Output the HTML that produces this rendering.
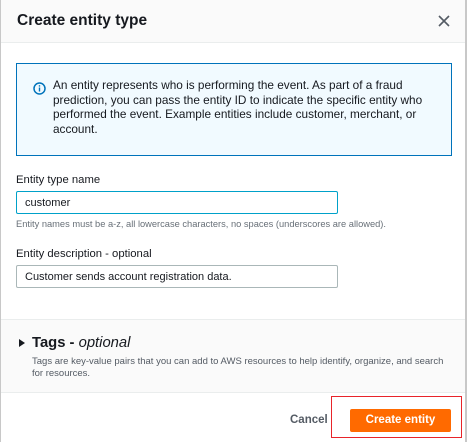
<!DOCTYPE html>
<html><head><meta charset="utf-8"><style>
*{margin:0;padding:0;box-sizing:border-box}
body{width:468px;height:442px;background:#fff;font-family:"Liberation Sans",sans-serif;color:#16191f;position:relative;overflow:hidden}
.frame{position:absolute;left:0;top:0;width:467px;height:442px;border-left:1px solid #c8c8c8;border-right:2px solid #c8c8c8}
.hdr{position:absolute;left:1px;top:0;width:464px;height:43px;background:#fafafa;border-bottom:1px solid #eaeded}
.hdr h1{position:absolute;left:16px;top:12px;font-size:15.5px;font-weight:bold}
.x{position:absolute;left:436px;top:14px}
.info{position:absolute;left:16px;top:63px;width:436px;height:93px;background:#f1faff;border:1px solid #0073bb;}
.info .ic{position:absolute;left:16px;top:18px}
.info p{position:absolute;left:36px;top:14px;width:372px;font-size:11.8px;line-height:14.7px}
.lbl{position:absolute;left:16px;font-size:11.3px}
.inp{position:absolute;left:16px;width:322px;height:23px;border:1px solid #aab7b8;border-radius:2px;font-size:11px;padding:5px 8px}
.hint{position:absolute;left:16px;top:219px;font-size:9.3px;color:#687078}
.tags{position:absolute;left:1px;top:319px;width:464px;height:74px;background:#fafafa;border-top:1px solid #eaeded;border-bottom:1px solid #eaeded}
.tags .t{position:absolute;left:31px;top:15px;font-size:14.8px;font-weight:bold}
.tags .t i{font-weight:normal;font-style:italic}
.tags .tri{position:absolute;left:18px;top:19px;width:0;height:0;border-left:6px solid #16191f;border-top:4.5px solid transparent;border-bottom:4.5px solid transparent}
.tags p{position:absolute;left:31px;top:36px;width:418px;font-size:9.5px;line-height:12px;color:#545b64}
.cancel{position:absolute;left:290px;top:414px;font-size:11.5px;font-weight:bold;color:#545b64}
.btn{position:absolute;left:350px;top:409px;width:101px;height:23px;background:#ff6a00;border-radius:2px;color:#fff;font-weight:bold;font-size:11.5px;text-align:center;line-height:23px}
.red{position:absolute;left:331px;top:396px;width:131px;height:42px;border:1.5px solid #e8242a}
</style></head><body>
<div class="frame"></div>
<div class="hdr"><h1>Create entity type</h1>
<svg class="x" width="14" height="14" viewBox="0 0 14 14"><path d="M2 2L12 12M12 2L2 12" stroke="#545b64" stroke-width="1.6"/></svg></div>
<div class="info">
<svg class="ic" width="13" height="13" viewBox="0 0 13 13"><circle cx="6.5" cy="6.5" r="5.5" fill="none" stroke="#0073bb" stroke-width="1.5"/><rect x="5.8" y="5.5" width="1.4" height="4" fill="#0073bb"/><rect x="5.8" y="3.2" width="1.4" height="1.4" fill="#0073bb"/></svg>
<p>An entity represents who is performing the event. As part of a fraud<br>prediction, you can pass the entity ID to indicate the specific entity who<br>performed the event. Example entities include customer, merchant, or<br>account.</p></div>
<div class="lbl" style="top:174px">Entity type name</div>
<div class="inp" style="top:191px;border:1.5px solid #00a1c9">customer</div>
<div class="hint">Entity names must be a-z, all lowercase characters, no spaces (underscores are allowed).</div>
<div class="lbl" style="top:248px">Entity description - optional</div>
<div class="inp" style="top:265px">Customer sends account registration data.</div>
<div class="tags"><div class="tri"></div><div class="t">Tags - <i>optional</i></div>
<p>Tags are key-value pairs that you can add to AWS resources to help identify, organize, and search<br>for resources.</p></div>
<div class="cancel">Cancel</div>
<div class="btn">Create entity</div>
<div class="red"></div>
</body></html>
